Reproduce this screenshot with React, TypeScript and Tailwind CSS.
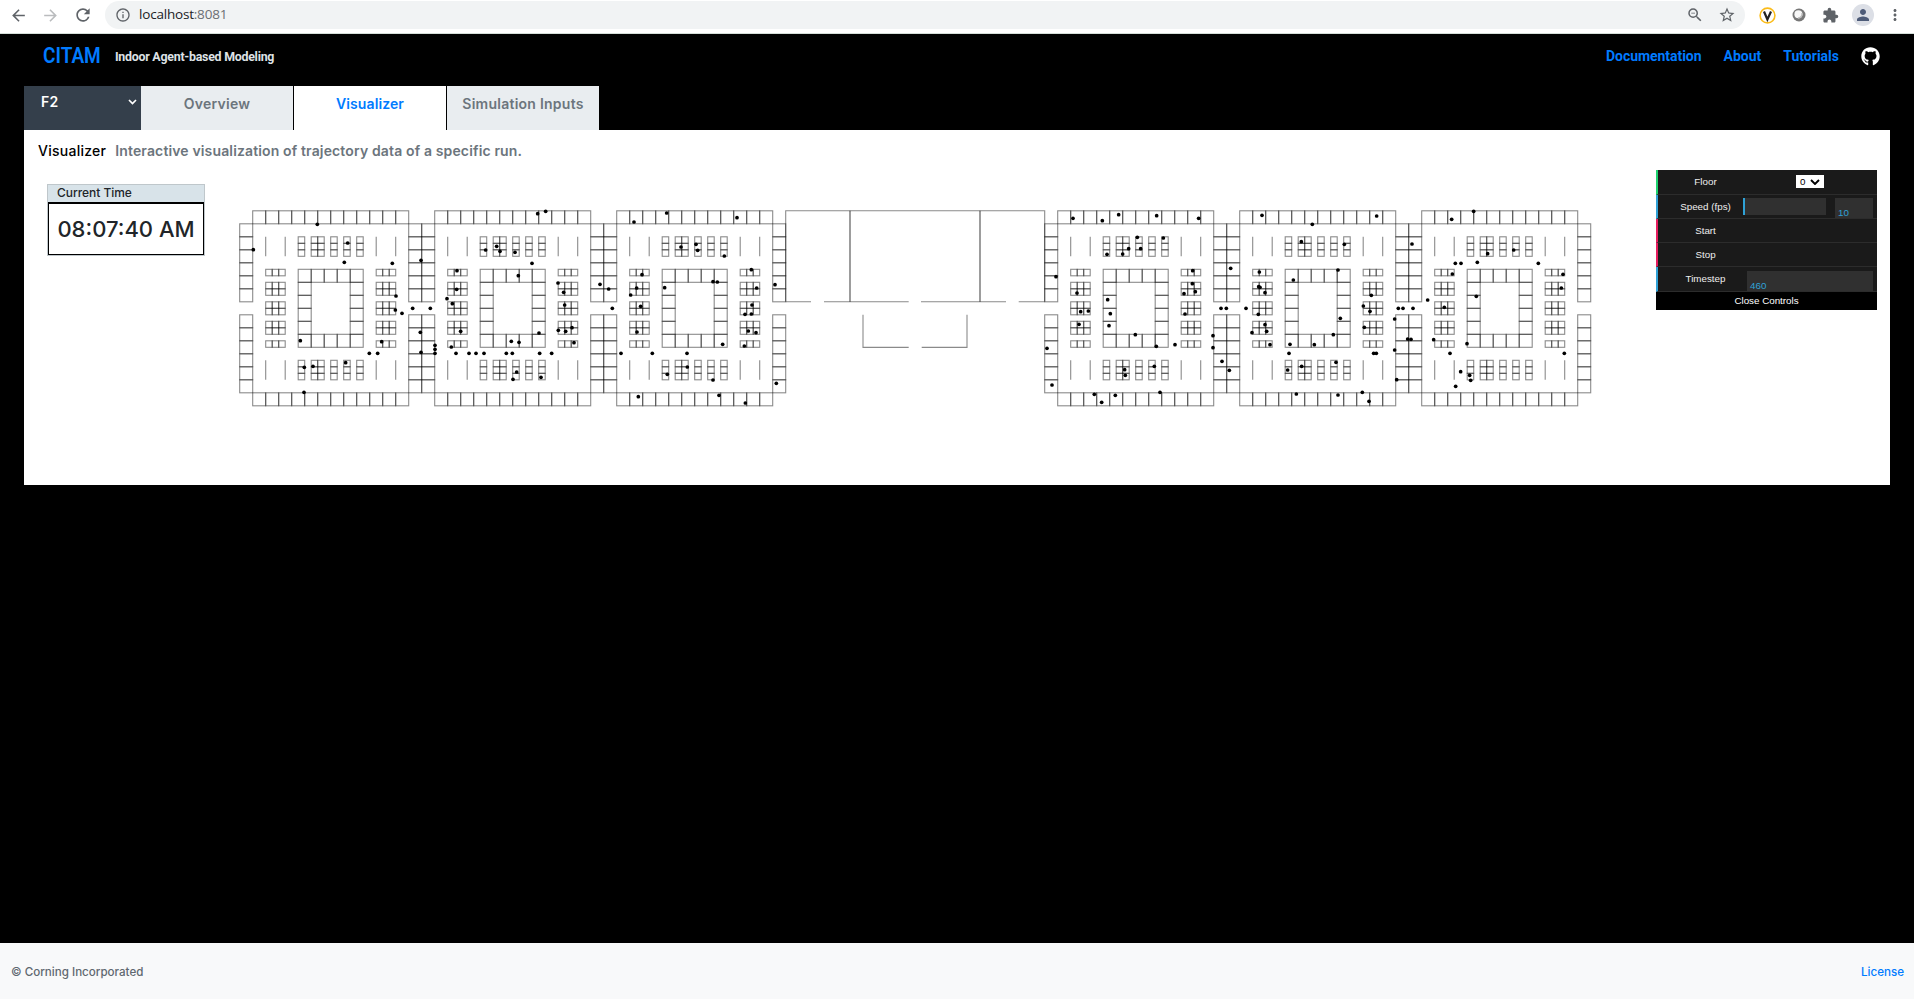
import React from "react";
import { FaGithub } from "react-icons/fa";
import { MdArrowBack, MdArrowForward, MdRefresh, MdInfoOutline, MdZoomOut, MdStarBorder, MdExtension, MdPerson, MdMoreVert } from "react-icons/md";

type Seg = [number, number, number, number];

const U = 13;

function cells(x: number, y: number, cols: number, rows: number, s = 1): Seg[] {
  const out: Seg[] = [];
  for (let i = 0; i < cols; i++)
    for (let j = 0; j < rows; j++) out.push([x + i * s, y + j * s, s, s]);
  return out;
}

function blockCells(): Seg[] {
  const r: Seg[] = [
    ...cells(0, 0, 12, 1),
    ...cells(0, 14, 12, 1),
    ...cells(-1, 1, 1, 6),
    ...cells(-1, 8, 1, 6),
    ...cells(12, 1, 1, 6),
    ...cells(12, 8, 1, 6),
    ...cells(3.5, 4.5, 5, 1),
    ...cells(3.5, 9.5, 5, 1),
    ...cells(3.5, 5.5, 1, 4),
    ...cells(7.5, 5.5, 1, 4),
  ];
  for (const y of [2, 11.5]) {
    r.push(...cells(4.5, y, 2, 3, 0.5));
    for (const x of [3.5, 6, 7, 8]) r.push(...cells(x, y, 1, 3, 0.5));
  }
  for (const x of [1, 9.5]) {
    r.push(...cells(x, 4.5, 3, 1, 0.5), ...cells(x, 10, 3, 1, 0.5));
    for (const y of [5.5, 7, 8.5]) r.push(...cells(x, y, 3, 2, 0.5));
  }
  return r;
}

const rooms = blockCells();
const postPath = [1, 2.5, 9.5, 11]
  .flatMap((x) => [2, 11.5].map((y) => `M${x * U} ${y * U}v${1.5 * U}`))
  .join("");

const blocks = [252.7, 434.7, 616.7, 1057.7, 1239.7, 1421.7];

// Agent positions per wing, in thirds of a pixel from the wing's origin.
const agents: { ox: number; pts: [number, number][] }[] = [
  { ox: 230, pts: [[262,73],[70,149],[353,129],[343,187],[487,190],[573,181],[498,288],[496,330],[516,340],[548,325],[601,325],[571,397],[573,457],[615,436],[615,448],[615,460],[211,422],[455,425],[418,460],[443,460],[223,502],[249,499],[347,488],[222,577]] },
  { ox: 410, pts: [[383,41],[407,34],[227,150],[260,139],[270,154],[315,157],[366,190],[141,212],[325,227],[140,268],[111,296],[127,311],[152,394],[124,441],[444,249],[461,277],[464,315],[445,391],[467,394],[486,383],[492,428],[387,399],[304,424],[327,427],[138,460],[177,460],[198,460],[222,460],[289,460],[307,460],[389,460],[425,460],[320,516],[309,538],[393,532],[570,253],[596,267],[607,325]] },
  { ox: 590, pts: [[132,66],[230,39],[441,53],[273,141],[318,133],[323,151],[403,168],[156,224],[140,264],[122,285],[152,319],[141,396],[224,263],[369,245],[382,246],[484,209],[500,264],[486,315],[465,343],[484,342],[475,393],[498,398],[463,438],[555,254],[398,433],[93,460],[187,460],[291,460],[292,501],[232,523],[369,540],[145,590],[387,586],[466,609],[559,550]] },
  { ox: 1035, pts: [[114,55],[202,62],[251,44],[365,47],[491,55],[307,112],[385,114],[281,146],[317,146],[216,163],[263,162],[63,230],[126,279],[137,335],[160,333],[132,373],[218,299],[226,341],[222,377],[301,404],[364,439],[420,434],[473,212],[472,251],[481,275],[447,281],[450,342],[587,205],[558,325],[574,325],[534,407],[534,443],[561,484],[583,511],[36,445],[51,555],[269,509],[271,526],[358,499],[178,583],[200,607],[241,586],[375,577]] },
  { ox: 1215, pts: [[141,46],[292,73],[485,48],[259,125],[388,133],[133,216],[131,260],[135,262],[150,278],[235,240],[369,210],[93,325],[130,343],[150,374],[155,394],[111,398],[165,434],[225,433],[298,434],[355,404],[376,355],[469,286],[445,318],[465,334],[448,382],[222,460],[476,460],[484,460],[218,510],[260,499],[363,487],[244,582],[369,585],[442,577],[462,604],[591,132],[550,325],[564,325],[594,325],[539,357],[578,417],[588,418],[539,450],[545,539]] },
  { ox: 1395, pts: [[170,58],[236,34],[278,161],[356,150],[181,190],[198,190],[247,187],[430,190],[172,222],[504,223],[499,264],[98,300],[148,322],[244,289],[116,419],[216,431],[165,460],[508,460],[197,515],[224,526],[227,541],[182,559]] },
];

function FloorPlan() {
  return (
    <svg width="1380" height="230" viewBox="230 190 1380 230" fill="none" className="block">
      <g stroke="#000" strokeWidth="1.1" strokeOpacity="0.46">
        {blocks.map((x) => (
          <g key={x} transform={`translate(${x} 210.8)`}>
            {rooms.map(([cx, cy, w, h]) => (
              <rect key={`${cx},${cy}`} x={cx * U} y={cy * U} width={w * U} height={h * U} />
            ))}
            <path d={postPath} />
          </g>
        ))}
        <path d="M785.7 301.8V210.8H1044.7V301.8M785.7 301.8h25.3M824 301.8h84.7M921 301.8h85M1018.7 301.8h26M863 314.8v32.6h45.7M967 314.8v32.6h-45.3" />
        <path d="M850 210.8v91M980 210.8v91" strokeOpacity="0.7" />
      </g>
      <g fill="#000">
        {agents.flatMap(({ ox, pts }) =>
          pts.map(([x, y]) => <circle key={`${ox}-${x}-${y}`} cx={ox + x / 3} cy={200 + y / 3} r="1.85" />)
        )}
      </g>
    </svg>
  );
}

function BrowserBar() {
  return (
    <div className="flex h-[34px] items-start border-b border-[#d5dfd9] bg-white text-[#5f6368]">
      <div className="flex h-[30px] w-[105px] shrink-0 items-center pl-[9px]">
        <MdArrowBack size={19} />
        <MdArrowForward size={19} className="ml-[13px] text-[#babcbe]" />
        <MdRefresh size={20} className="ml-[13px]" />
      </div>
      <div className="mt-px flex h-[28px] w-[1640px] items-center rounded-full bg-[#f1f3f4] pl-[10px] pr-[9px]">
        <MdInfoOutline size={16} />
        <span className="ml-[8px] font-['Open_Sans',sans-serif] text-[13.5px] leading-none tracking-[-0.2px] text-[#202124]">
          localhost<span className="text-[#6b6f73]">:8081</span>
        </span>
        <div className="ml-auto flex items-center gap-[14px]">
          <MdZoomOut size={18} />
          <MdStarBorder size={18} />
        </div>
      </div>
      <div className="flex h-[30px] flex-1 items-center pl-[14px]">
        <svg width="17" height="17" viewBox="0 0 17 17">
          <circle cx="8.5" cy="8.5" r="7.4" fill="#fff" stroke="#fbbc1a" strokeWidth="1.6" />
          <path d="M5 4.5l3.4 8 3.6-8" fill="none" stroke="#222" strokeWidth="2.2" />
        </svg>
        <svg width="14" height="14" viewBox="0 0 14 14" className="ml-[16px]">
          <circle cx="7" cy="7" r="6.5" fill="#777" />
          <circle cx="6.4" cy="6.2" r="4" fill="#f7f7f7" />
          <path d="M6 10a4 4 0 0 0 4-5" fill="none" stroke="#bbb" strokeWidth="1.5" />
        </svg>
        <MdExtension size={17} className="ml-[16px]" />
        <div className="ml-[13px] flex size-[22px] items-center justify-center rounded-full bg-[#dcdfe6] text-[#4d5b78]">
          <MdPerson size={18} />
        </div>
        <MdMoreVert size={18} className="ml-[12px]" />
      </div>
    </div>
  );
}

function Row({ accent, label, tall, children }: { accent: string; label: string; tall?: boolean; children?: React.ReactNode }) {
  return (
    <div className={`flex border-b border-l-2 border-b-[#2c2c2c] ${tall ? "h-[25px]" : "h-[24px]"} ${accent}`}>
      <div className="flex h-[23px] w-[95px] shrink-0 items-center justify-center">{label}</div>
      {children}
    </div>
  );
}

function Controls() {
  return (
    <div className="w-[221px] bg-[#1a1a1a] font-['Liberation_Sans',sans-serif] text-[9.8px] leading-none text-[#eee]">
      <Row accent="border-l-[#1ed36f]" label="Floor" tall>
        <div className="ml-[43px] mt-[5px] flex h-[13px] w-[28px] items-center justify-between bg-white px-[4px] text-black">
          <span>0</span>
          <svg width="10" height="6" viewBox="0 0 10 6"><path d="M1 1l4 4 4-4" fill="none" stroke="#000" strokeWidth="1.9" /></svg>
        </div>
      </Row>
      <Row accent="border-l-[#2fa1d6]" label="Speed (fps)">
        <div className="ml-[-10px] mt-[3px] h-[17px] w-[83px] border-l-2 border-[#2fa1d6] bg-[#303030]" />
        <div className="ml-[9px] mt-[3px] flex h-[20px] w-[38px] items-end bg-[#303030] pl-[3px] text-[#2fa1d6]">10</div>
      </Row>
      <Row accent="border-l-[#e61d5f]" label="Start" />
      <Row accent="border-l-[#e61d5f]" label="Stop" />
      <Row accent="border-l-[#2fa1d6]" label="Timestep" tall>
        <div className="ml-[-6px] mt-[4px] flex h-[20px] w-[126px] items-end bg-[#303030] pl-[3px] text-[#2fa1d6]">460</div>
      </Row>
      <div className="flex h-[18px] items-center justify-center bg-black text-white">Close Controls</div>
    </div>
  );
}

export default function App() {
  return (
    <div className="flex h-[999px] w-[1914px] flex-col overflow-hidden bg-black font-[Inter,sans-serif]">
      <BrowserBar />
      <header className="flex h-[52px] shrink-0 items-start pl-[43px] pr-[34px] pt-[11px] font-[Roboto,sans-serif]">
        <span className="h-[24px] w-[72px] text-[22px] font-semibold leading-[22px] text-[#007bff]">
          <span className="inline-block origin-left scale-x-[0.865]">CITAM</span>
        </span>
        <span className="text-[12.5px] font-bold leading-[23px] tracking-[-0.25px] text-[#dee2e6]">
          <span className="inline-block origin-left scale-x-[0.99]">Indoor Agent-based Modeling</span>
        </span>
        <nav className="ml-auto flex items-center text-[14px] font-bold leading-[23px] text-[#007bff]">
          <span className="tracking-[-0.04px]">Documentation</span>
          <span className="ml-[22px]">About</span>
          <span className="ml-[22px]">Tutorials</span>
          <FaGithub size={19} className="ml-[22px] text-white" />
        </nav>
      </header>
      <div className="ml-[24px] flex h-[44px] shrink-0 text-[14px] font-semibold tracking-[0.25px] text-[#6c757d]">
        <div className="flex w-[117px] items-start justify-between bg-[#343f4b] pl-[17px] pr-[4px] pt-[6px] leading-[20px] text-white">
          <span>F2</span>
          <svg width="9" height="6" viewBox="0 0 9 6" className="mt-[7px]"><path d="M1 1l3.5 3.5L8 1" fill="none" stroke="#fff" strokeWidth="1.7" /></svg>
        </div>
        <div className="w-[152px] bg-[#e9edf0] pt-[8px] text-center leading-[20px]">Overview</div>
        <div className="ml-px w-[152px] bg-white pt-[8px] text-center leading-[20px] tracking-[0.1px] text-[#007bff]">Visualizer</div>
        <div className="ml-px w-[152px] bg-[#e9edf0] pt-[8px] text-center leading-[20px]">Simulation Inputs</div>
      </div>
      <main className="ml-[24px] flex h-[355px] w-[1866px] shrink-0 flex-col bg-white">
        <h1 className="mt-[11px] pl-[14px] text-[14px] font-medium leading-[20px] tracking-[0.26px] text-black">
          Visualizer <span className="ml-[5px] font-semibold tracking-[0.14px] text-[#6c757d]">Interactive visualization of trajectory data of a specific run.</span>
        </h1>
        <div className="flex">
          <div className="ml-[23px] mt-[23px] h-[72px] w-[158px] shrink-0 border border-[#bfc7cb]">
            <div className="h-[17px] bg-[#d8e3e9] pl-[9px] text-[12px] font-medium leading-[16px] tracking-[-0.05px] text-[#212529]">Current Time</div>
            <div className="flex h-[53px] items-center justify-center border border-t-2 border-black text-[22px] font-medium text-[#212529]">08:07:40 AM</div>
          </div>
          <div className="ml-[25px] mt-[29px] w-[1380px] shrink-0"><FloorPlan /></div>
          <div className="ml-[46px] mt-[9px]"><Controls /></div>
        </div>
      </main>
      <footer className="mt-auto flex h-[56px] items-center justify-between bg-[#f8f9fa] pl-[11px] pr-[10px] pt-[3px] text-[11.6px] font-medium text-[#5f6870]">
        <span>© Corning Incorporated</span>
        <span className="text-[#007bff]">License</span>
      </footer>
    </div>
  );
}
